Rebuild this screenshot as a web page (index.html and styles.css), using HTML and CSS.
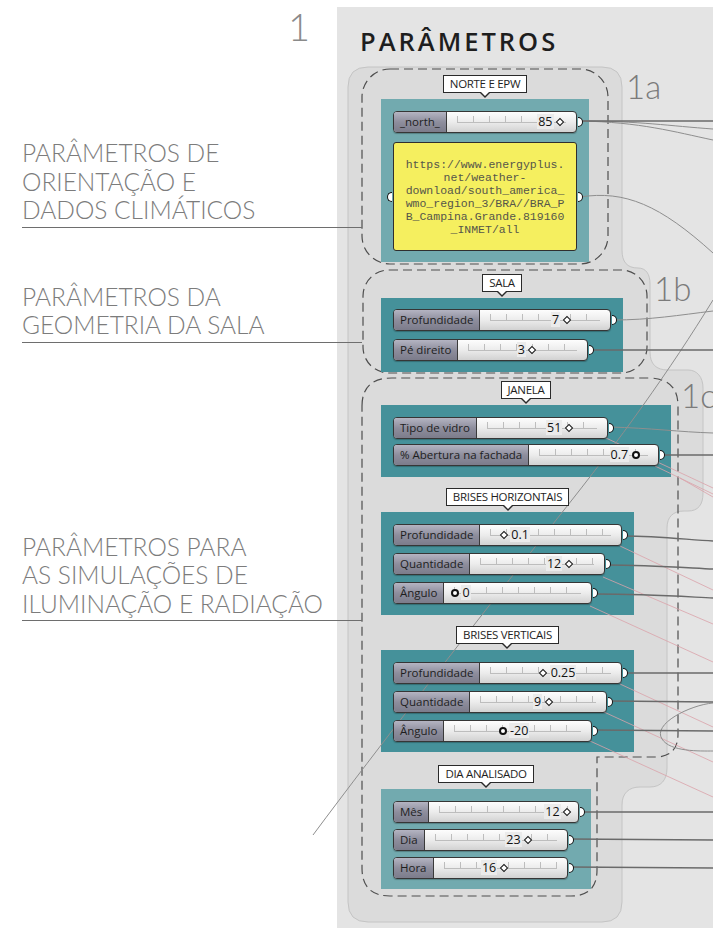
FILE: index.html
```html
<!DOCTYPE html>
<html lang="pt">

<head>
  <meta charset="UTF-8">
  <meta name="viewport" content="width=device-width, initial-scale=1.0">
  <title>Parâmetros</title>
  <link rel="stylesheet" href="styles.css">
</head>

<body>
  <div class="sheet">

    <aside class="notes">
      <div class="step-no">1</div>
      <p class="note note-orient">PARÂMETROS DE<br>ORIENTAÇÃO E<br>DADOS CLIMÁTICOS</p>
      <p class="note note-sala">PARÂMETROS DA<br>GEOMETRIA DA SALA</p>
      <p class="note note-sim">PARÂMETROS PARA<br>AS SIMULAÇÕES DE<br>ILUMINAÇÃO E RADIAÇÃO</p>
    </aside>

    <section class="canvas">
      <!-- group shapes -->
      <svg class="shapes" viewBox="337 7 376 921" width="376" height="921">
        <path class="blob" d="M368 67 H602 Q622 67 622 87 V250 C622 262 627 268 638 268 C646 268 650 274 650 284 V352 C650 364 656 370 668 370 H688 C697 370 703 377 703 388 V493 C703 505 698 511 688 511 H684 C673 511 667 517 667 528 V768 C667 780 661 787 650 787 H640 C629 787 622 793 622 805 V902 Q622 922 602 922 H368 Q348 922 348 902 V87 Q348 67 368 67 Z" />
        <rect class="dash" x="362" y="69" width="246" height="195" rx="28" />
        <rect class="dash" x="363" y="270" width="284" height="103" rx="26" />
        <path class="dash" d="M362 406 Q362 378 392 378 H648 Q678 378 678 406 V734 Q678 757 655 757 H597 V870 Q597 896 571 896 H390 Q362 896 362 868 Z" />
      </svg>

      <!-- wires -->
      <svg class="wires" viewBox="337 7 376 921" width="376" height="921">
        <g class="pink">
          <path d="M606 438 L713 488" />
          <path d="M655 466 L713 494" />
          <path d="M680 478 L713 497" />
          <path d="M620 546 L713 590" />
          <path d="M603 577 L713 624" />
          <path d="M590 606 L713 662" />
          <path d="M620 684 L713 727" />
          <path d="M604 712 L713 762" />
          <path d="M590 741 L713 797" />
        </g>
        <g class="thin">
          <path d="M313 835 C380 745 470 630 560 515 C620 440 670 370 713 300" />
          <path d="M580 121 C640 121 670 126 713 129" />
          <path d="M580 121 C640 122 675 132 713 140" />
          <path d="M580 197 C625 190 660 205 713 253" />
          <path d="M613 320 C650 320 680 315 713 311" />
          <path d="M610 427 C650 428 680 432 713 433" />
          <path d="M713 703 C690 705 652 724 662 739 C670 752 700 751 713 751" />
        </g>
        <g class="main">
          <path d="M580 121 L713 121" />
          <path d="M590 350 L713 350" />
          <path d="M661 455 L713 455" />
          <path d="M624 536 C660 536 690 540 713 541" />
          <path d="M607 565 C650 565 690 568 713 569" />
          <path d="M595 594 C650 594 690 597 713 598" />
          <path d="M624 673 L713 673" />
          <path d="M609 701 L713 702" />
          <path d="M595 730 L713 731" />
          <path d="M580 812 L713 812" />
          <path d="M569 839 L713 840" />
          <path d="M569 867 L713 868" />
        </g>
      </svg>

      <span class="group-id id-1a">1a</span>
      <span class="group-id id-1b">1b</span>
      <span class="group-id id-1c">1c</span>

      <h1 class="title">PARÂMETROS</h1>

      <div class="stack">

        <div class="node">
          <div class="tag">NORTE E EPW</div>
          <div class="panel panel-light panel-norte">
            <div class="slider" style="width:184px">
              <span class="slider-name">_north_</span>
              <span class="slider-track"><span class="rail"></span><span class="thumb" style="left:88%"><b class="val">85</b></span></span>
            </div>
            <div class="memo">https://www.energyplus.<br>net/weather-<br>download/south_america_<br>wmo_region_3/BRA//BRA_P<br>B_Campina.Grande.819160<br>_INMET/all</div>
          </div>
        </div>

        <div class="node node-sala">
          <div class="tag">SALA</div>
          <div class="panel panel-sala">
            <div class="slider" style="width:218px">
              <span class="slider-name">Profundidade</span>
              <span class="slider-track"><span class="rail"></span><span class="thumb" style="left:67%"><b class="val">7</b></span></span>
            </div>
            <div class="slider" style="width:195px">
              <span class="slider-name">Pé direito</span>
              <span class="slider-track"><span class="rail"></span><span class="thumb" style="left:58%"><b class="val">3</b></span></span>
            </div>
          </div>
        </div>

        <div class="node node-janela">
          <div class="tag">JANELA</div>
          <div class="panel panel-janela">
            <div class="slider" style="width:215px">
              <span class="slider-name">Tipo de vidro</span>
              <span class="slider-track"><span class="rail"></span><span class="thumb" style="left:71%"><b class="val">51</b></span></span>
            </div>
            <div class="slider" style="width:266px">
              <span class="slider-name">% Abertura na fachada</span>
              <span class="slider-track"><span class="rail"></span><span class="thumb thumb-round" style="left:83%"><b class="val">0.7</b></span></span>
            </div>
          </div>
        </div>

        <div class="node node-brises">
          <div class="tag">BRISES HORIZONTAIS</div>
          <div class="panel">
            <div class="slider" style="width:229px">
              <span class="slider-name">Profundidade</span>
              <span class="slider-track"><span class="rail"></span><span class="thumb thumb-end" style="left:17%"><b class="val">0.1</b></span></span>
            </div>
            <div class="slider" style="width:212px">
              <span class="slider-name">Quantidade</span>
              <span class="slider-track"><span class="rail"></span><span class="thumb" style="left:74%"><b class="val">12</b></span></span>
            </div>
            <div class="slider" style="width:199px">
              <span class="slider-name">Ângulo</span>
              <span class="slider-track"><span class="rail"></span><span class="thumb thumb-round thumb-end" style="left:7.5%"><b class="val">0</b></span></span>
            </div>
          </div>
        </div>

        <div class="node node-brises">
          <div class="tag">BRISES VERTICAIS</div>
          <div class="panel panel-bv">
            <div class="slider" style="width:229px">
              <span class="slider-name">Profundidade</span>
              <span class="slider-track"><span class="rail"></span><span class="thumb thumb-end" style="left:45%"><b class="val">0.25</b></span></span>
            </div>
            <div class="slider" style="width:214px">
              <span class="slider-name">Quantidade</span>
              <span class="slider-track"><span class="rail"></span><span class="thumb" style="left:58%"><b class="val">9</b></span></span>
            </div>
            <div class="slider" style="width:199px">
              <span class="slider-name">Ângulo</span>
              <span class="slider-track"><span class="rail"></span><span class="thumb thumb-round thumb-end" style="left:40%"><b class="val">-20</b></span></span>
            </div>
          </div>
        </div>

        <div class="node node-dia">
          <div class="tag">DIA ANALISADO</div>
          <div class="panel panel-light panel-dia">
            <div class="slider" style="width:186px">
              <span class="slider-name">Mês</span>
              <span class="slider-track"><span class="rail"></span><span class="thumb" style="left:93%"><b class="val">12</b></span></span>
            </div>
            <div class="slider" style="width:175px">
              <span class="slider-name">Dia</span>
              <span class="slider-track"><span class="rail"></span><span class="thumb" style="left:73%"><b class="val">23</b></span></span>
            </div>
            <div class="slider" style="width:175px">
              <span class="slider-name">Hora</span>
              <span class="slider-track"><span class="rail"></span><span class="thumb" style="left:53%"><b class="val">16</b></span></span>
            </div>
          </div>
        </div>

      </div>
    </section>

  </div>
</body>

</html>
```

FILE: styles.css
```css
body {
  margin: 0;
  background: #fff;
  font-family: "Open Sans", "DejaVu Sans", sans-serif;
}

.sheet {
  display: flex;
  width: 713px;
  height: 928px;
  overflow: hidden;
}

/* left column with the captions */
.notes {
  width: 337px;
  flex: none;
  padding-top: 6px;
  box-sizing: border-box;
  font-family: Lato, "Open Sans", sans-serif;
}

.step-no {
  font-size: 38px;
  line-height: 40px;
  text-align: right;
  padding-right: 27px;
  color: #8a8a8a;
  font-weight: 300;
}

.note {
  position: relative;
  z-index: 3;
  margin: 0 0 0 22px;
  font-size: 24.5px;
  line-height: 28.5px;
  font-weight: 300;
  color: #7c7c7c;
  white-space: nowrap;
}

.note::after {
  content: "";
  display: block;
  width: 340px;
  height: 1px;
  margin-top: 2px;
  background: #6e6e6e;
}

.note-orient { margin-top: 93px; }
.note-sala { margin-top: 55px; }
.note-sim { margin-top: 190px; }

/* grasshopper canvas */
.canvas {
  position: relative;
  z-index: 0;
  flex: 1;
  margin-top: 7px;
  padding-top: 20px;
  box-sizing: border-box;
  background: #e4e4e4;
}

.shapes,
.wires {
  position: absolute;
  left: 0;
  top: 0;
  overflow: visible;
}

.shapes { z-index: -1; }
.wires { z-index: 1; }

.blob {
  fill: #dbdbdb;
  stroke: #c4c4c4;
  stroke-width: 1;
}

.dash {
  fill: none;
  stroke: #4e4e4e;
  stroke-width: 1.2;
  stroke-dasharray: 9 5;
}

.wires path { fill: none; }
.wires .main path { stroke: #6a6a6a; stroke-width: 1.4; }
.wires .thin path { stroke: #8e8e8e; stroke-width: 1; }
.wires .pink path { stroke: #dba2aa; stroke-width: 0.8; }

.group-id {
  position: absolute;
  z-index: 1;
  font-family: Lato, "Open Sans", sans-serif;
  font-size: 33px;
  line-height: 32px;
  font-weight: 300;
  color: #7b7b7b;
}

.id-1a { left: 289px; top: 63px; }
.id-1b { left: 317px; top: 265px; }
.id-1c { left: 344px; top: 372px; }

.title {
  margin: 0 0 0 23px;
  font-family: "Open Sans", "DejaVu Sans", sans-serif;
  font-size: 25.5px;
  line-height: 28px;
  font-weight: 600;
  letter-spacing: 3px;
  color: #1e1e1e;
}

.stack {
  display: flex;
  flex-direction: column;
  align-items: flex-start;
  margin-top: 20px;
  padding-left: 44px;
}

.node {
  display: flex;
  flex-direction: column;
  align-items: center;
}

.node-sala { margin-top: 12px; }
.node-janela { margin-top: 9px; }
.node-brises { margin-top: 11px; }
.node-dia { margin-top: 13px; }

.tag {
  position: relative;
  z-index: 2;
  height: 18px;
  box-sizing: border-box;
  margin-bottom: 6px;
  padding: 0 6px;
  background: #fff;
  border: 1px solid #2a2a2a;
  font-size: 11.5px;
  line-height: 16px;
  letter-spacing: -0.3px;
  color: #1e1e1e;
  white-space: nowrap;
}

.tag::before,
.tag::after {
  content: "";
  position: absolute;
  left: 50%;
  border-style: solid;
  border-color: transparent;
  border-bottom-width: 0;
}

.tag::before {
  top: 100%;
  margin-left: -6px;
  border-width: 6px 6px 0;
  border-top-color: #2a2a2a;
}

.tag::after {
  top: calc(100% - 1px);
  margin-left: -5px;
  border-width: 5px 5px 0;
  border-top-color: #fff;
}

.panel {
  display: flex;
  flex-direction: column;
  align-items: flex-start;
  gap: 7px;
  padding: 12px 12px 11px;
  background: #45919a;
}

.panel-light { background: #72aaaf; }
.panel-norte { gap: 9px; }
.panel-sala { padding-top: 11px; gap: 8px; }
.panel-janela { gap: 5px; }
.panel-bv { padding-bottom: 10px; }
.panel-dia { gap: 6px; padding-bottom: 10px; }

/* number slider */
.slider {
  position: relative;
  z-index: 2;
  display: flex;
  height: 22px;
  box-sizing: border-box;
  border: 1px solid #363636;
  border-radius: 4px;
  background: linear-gradient(#fdfdfd, #ececec 50%, #d2d2d2);
  box-shadow: 0 1px 1px rgba(0, 0, 0, 0.25);
}

.slider::after {
  content: "";
  position: absolute;
  right: -7px;
  top: 50%;
  margin-top: -5px;
  width: 4px;
  height: 8px;
  border: 1.5px solid #111;
  border-left: 0;
  border-radius: 0 5px 5px 0;
  background: #fff;
}

.slider-name {
  padding: 0 6px;
  border-right: 1px solid #3a3a3a;
  border-radius: 3px 0 0 3px;
  background: linear-gradient(#b4b4c2, #8e8e9d 50%, #7c7c8b);
  font-size: 11.5px;
  line-height: 20px;
  color: #1e1e1e;
  white-space: nowrap;
}

.slider-track {
  position: relative;
  flex: 1;
}

.rail {
  position: absolute;
  left: 10px;
  right: 10px;
  top: 4px;
  height: 6px;
  border-bottom: 1px solid #bdbdbd;
  background: repeating-linear-gradient(90deg, #bdbdbd 0 1px, transparent 1px 16px);
}

.thumb {
  position: absolute;
  top: 50%;
  width: 0;
  height: 0;
}

.thumb::before {
  content: "";
  position: absolute;
  left: -3.5px;
  top: -3.5px;
  width: 4px;
  height: 4px;
  border: 1.5px solid #111;
  background: #fff;
  transform: rotate(45deg);
}

.thumb-round::before {
  left: -4px;
  top: -4px;
  width: 4px;
  height: 4px;
  border: 2px solid #111;
  border-radius: 50%;
  transform: none;
}

.val {
  position: absolute;
  right: 7px;
  top: -8px;
  padding: 0 1px;
  background: #ebebeb;
  font-size: 12.5px;
  line-height: 15px;
  font-weight: normal;
  color: #111;
  white-space: nowrap;
}

.thumb-end .val {
  right: auto;
  left: 6px;
}

/* yellow text panel */
.memo {
  position: relative;
  z-index: 2;
  width: 184px;
  height: 109px;
  box-sizing: border-box;
  display: flex;
  align-items: center;
  justify-content: center;
  text-align: center;
  background: #f5ef5f;
  border: 1px solid #2f2f2f;
  border-radius: 3px;
  font-family: "Liberation Mono", monospace;
  font-size: 11.5px;
  line-height: 13px;
  color: #56564a;
}

.memo::before,
.memo::after {
  content: "";
  position: absolute;
  top: 50%;
  margin-top: -5px;
  width: 4px;
  height: 8px;
  border: 1.5px solid #111;
  background: #fff;
}

.memo::before {
  left: -7px;
  border-right: 0;
  border-radius: 5px 0 0 5px;
}

.memo::after {
  right: -7px;
  border-left: 0;
  border-radius: 0 5px 5px 0;
}
```
